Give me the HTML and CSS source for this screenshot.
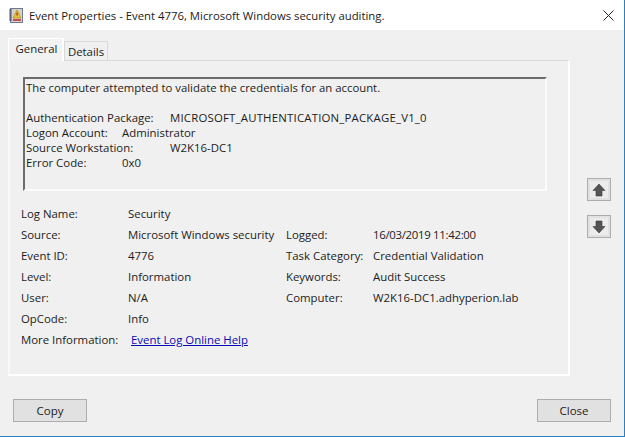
FILE: index.html
```html
<!DOCTYPE html>
<html lang="en">
<head>
<meta charset="utf-8">
<title>Event Properties</title>
<link rel="stylesheet" href="styles.css">
</head>
<body>
<div class="window">
  <header class="titlebar">
    <svg class="app-icon" width="14" height="15" viewBox="0 0 14 15">
      <rect x="1.5" y="0.5" width="12" height="14" fill="#d8d2c4" stroke="#6f7890"/>
      <path d="M0 2 H3 M0 4 H3 M0 6 H3 M0 8 H3 M0 10 H3 M0 12 H3" stroke="#4a5570" stroke-width="1"/>
      <path d="M8 2 L12 10 H4 Z" fill="#e8c530" stroke="#a8841a" stroke-width="0.6"/>
      <rect x="7.5" y="4.5" width="1.2" height="3" fill="#a02020"/>
      <rect x="4" y="11" width="8" height="2" fill="#c05060"/>
    </svg>
    <span class="title">Event Properties - Event 4776, Microsoft Windows security auditing.</span>
    <svg class="close-x" width="11" height="11" viewBox="0 0 11 11">
      <path d="M0.5 0.5 L10.5 10.5 M10.5 0.5 L0.5 10.5" stroke="#222" stroke-width="1" fill="none"/>
    </svg>
  </header>

  <div class="content">
    <div class="left">
      <nav class="tabs">
        <span class="tab active">General</span>
        <span class="tab">Details</span>
      </nav>
      <section class="panel">
        <div class="message">
          <p class="lead">The computer attempted to validate the credentials for an account.</p>
          <div class="msg-row"><span class="k1">Authentication Package:</span><span class="caps">MICROSOFT_AUTHENTICATION_PACKAGE_V1_0</span></div>
          <div class="msg-row"><span class="k2">Logon Account:</span><span>Administrator</span></div>
          <div class="msg-row"><span class="k1">Source Workstation:</span><span>W2K16-DC1</span></div>
          <div class="msg-row"><span class="k3">Error Code:</span><span>0x0</span></div>
        </div>
        <div class="fields">
          <span>Log Name:</span><span>Security</span><span></span><span></span>
          <span>Source:</span><span>Microsoft Windows security</span><span>Logged:</span><span class="date">16/03/2019 11:42:00</span>
          <span>Event ID:</span><span>4776</span><span>Task Category:</span><span>Credential Validation</span>
          <span>Level:</span><span>Information</span><span>Keywords:</span><span>Audit Success</span>
          <span>User:</span><span>N/A</span><span>Computer:</span><span>W2K16-DC1.adhyperion.lab</span>
          <span>OpCode:</span><span>Info</span><span></span><span></span>
          <span>More Information:</span><a class="link" href="#">Event Log Online Help</a><span></span><span></span>
        </div>
      </section>
    </div>
    <aside class="nav-buttons">
      <button class="arrow" type="button" aria-label="Previous">
        <svg width="14" height="14" viewBox="0 0 14 14"><path d="M7 1 L13 7.5 H10 V13 H4 V7.5 H1 Z" fill="#555" stroke="#3c3c3c" stroke-width="0.6"/></svg>
      </button>
      <button class="arrow" type="button" aria-label="Next">
        <svg width="14" height="14" viewBox="0 0 14 14"><path d="M7 13 L13 6.5 H10 V1 H4 V6.5 H1 Z" fill="#555" stroke="#3c3c3c" stroke-width="0.6"/></svg>
      </button>
    </aside>
  </div>

  <footer class="footer">
    <button class="btn" type="button">Copy</button>
    <button class="btn" type="button">Close</button>
  </footer>
</div>
</body>
</html>
```

FILE: styles.css
```css
* { box-sizing: border-box; }
html, body { margin: 0; padding: 0; }
body {
  width: 625px;
  height: 437px;
  overflow: hidden;
  font-family: "Open Sans", "Noto Sans", sans-serif;
  font-size: 11.4px;
  color: #1c1c1c;
}
.window {
  width: 625px;
  height: 437px;
  display: flex;
  flex-direction: column;
  background: #f0f0f0;
  border-right: 1px solid #2b80c0;
  border-bottom: 1px solid #2b80c0;
}
.titlebar {
  height: 30px;
  flex: none;
  background: #fff;
  display: flex;
  align-items: center;
  padding: 0 10px 0 9px;
}
.app-icon { flex: none; margin-right: 6px; }
.title { flex: 1; font-size: 11.35px; }
.close-x { flex: none; }
.content {
  flex: none;
  display: flex;
  padding: 8px 0 0 8px;
}
.left { width: 562px; flex: none; }
.tabs {
  display: flex;
  align-items: flex-end;
  height: 23px;
  position: relative;
  z-index: 1;
}
.tab {
  height: 20px;
  width: 44px;
  display: flex;
  align-items: center;
  justify-content: center;
  background: #f0f0f0;
  border: 1px solid #d9d9d9;
  margin-left: -1px;
}
.tab.active {
  width: 56px;
  height: 23px;
  margin-left: 0;
  margin-right: 1px;
  padding: 0 0 3px 2px;
  background: #f2f2f2;
  border-style: solid;
  border-width: 1px 2px 0 1px;
  border-color: #fff;
}
.panel {
  height: 316px;
  margin-top: -1px;
  background: #f0f0f0;
  border: 2px solid #fff;
  border-top: 1px solid #d9d9d9;
  border-left: 2px solid #f9f9f9;
  padding: 16px 21px 0 13px;
}
.message {
  height: 114px;
  border-style: solid;
  border-width: 2px;
  border-color: #6b6b6b #fbfbfb #fbfbfb #6b6b6b;
  padding: 1px 0 0 1px;
  line-height: 15px;
}
.lead { margin: 0 0 15px; font-size: 11.33px; }
.msg-row { height: 15px; white-space: nowrap; }
.k1 { display: inline-block; width: 144px; }
.k2 { display: inline-block; width: 96px; }
.k3 { display: inline-block; width: 96px; }
.caps { letter-spacing: 0.2px; }
.fields {
  display: grid;
  grid-template-columns: 107px 158px 87px 1fr;
  grid-auto-rows: 21px;
  margin: 12px 0 0 -2px;
  align-items: center;
  white-space: nowrap;
}
.date { letter-spacing: -0.3px; }
.link { color: #0a0ab4; text-decoration: underline; margin-left: 3px; }
.nav-buttons {
  display: flex;
  flex-direction: column;
  gap: 14px;
  margin: 140px 0 0 17px;
}
.arrow {
  width: 24px;
  height: 23px;
  padding: 0;
  display: flex;
  align-items: center;
  justify-content: center;
  background: #ececec;
  border: 1px solid #adadad;
  box-shadow: inset 0 0 0 2px #e1e1e1;
  border-radius: 0;
}
.footer {
  flex: none;
  display: flex;
  justify-content: space-between;
  padding: 23px 13px 0;
}
.btn {
  width: 74px;
  height: 23px;
  padding: 0;
  font: inherit;
  font-size: 11.5px;
  color: #1c1c1c;
  background: #e1e1e1;
  border: 1px solid #adadad;
  border-radius: 0;
}
```
